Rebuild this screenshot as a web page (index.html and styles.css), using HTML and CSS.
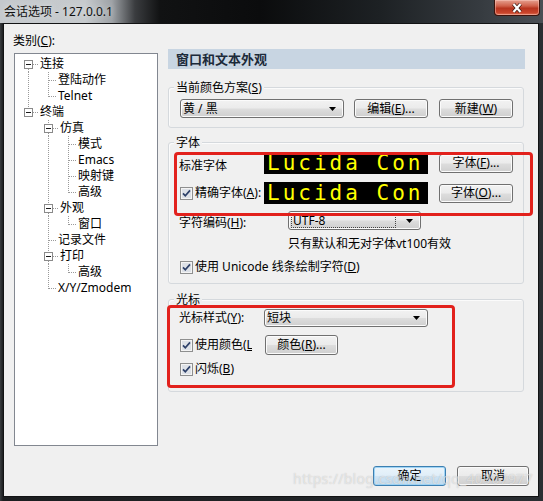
FILE: index.html
```html
<!DOCTYPE html>
<html lang="zh-CN">
<head>
<meta charset="utf-8">
<title>会话选项</title>
<link rel="stylesheet" href="styles.css">
</head>
<body>
<div class="window">
  <div class="titlebar">
    <span class="title">会话选项 - 127.0.0.1</span>
    <div class="close"><svg width="14" height="10" viewBox="0 0 14 10"><path d="M3.5 1 L10.5 9 M10.5 1 L3.5 9" stroke="#3a1a14" stroke-width="3.6"/><path d="M3.5 1 L10.5 9 M10.5 1 L3.5 9" stroke="#fff" stroke-width="2.2"/></svg></div>
  </div>
  <div class="client">
    <div class="main">
      <div class="left">
        <div class="cat-label">类别(<u>C</u>):</div>
        <div class="tree">
          <div class="trow"><svg width="25" height="16"><g class="ln"><path d="M13.5 13V16M18 8.5H23"/></g><rect class="bx" x="9.5" y="4.5" width="8" height="8"/><path class="mn" d="M11 8.5H16"/></svg><span>连接</span></div>
          <div class="trow"><svg width="43" height="16"><g class="ln"><path d="M13.5 0V16M33.5 0V16M34 8.5H42"/></g></svg><span>登陆动作</span></div>
          <div class="trow"><svg width="43" height="16"><g class="ln"><path d="M13.5 0V16M33.5 0V9M34 8.5H42"/></g></svg><span>Telnet</span></div>
          <div class="trow"><svg width="25" height="16"><g class="ln"><path d="M13.5 0V4M18 8.5H23"/></g><rect class="bx" x="9.5" y="4.5" width="8" height="8"/><path class="mn" d="M11 8.5H16"/></svg><span>终端</span></div>
          <div class="trow"><svg width="45" height="16"><g class="ln"><path d="M33.5 0V4M33.5 13V16M38 8.5H43"/></g><rect class="bx" x="29.5" y="4.5" width="8" height="8"/><path class="mn" d="M31 8.5H36"/></svg><span>仿真</span></div>
          <div class="trow"><svg width="63" height="16"><g class="ln"><path d="M33.5 0V16M53.5 0V16M54 8.5H62"/></g></svg><span>模式</span></div>
          <div class="trow"><svg width="63" height="16"><g class="ln"><path d="M33.5 0V16M53.5 0V16M54 8.5H62"/></g></svg><span>Emacs</span></div>
          <div class="trow"><svg width="63" height="16"><g class="ln"><path d="M33.5 0V16M53.5 0V16M54 8.5H62"/></g></svg><span>映射键</span></div>
          <div class="trow"><svg width="63" height="16"><g class="ln"><path d="M33.5 0V16M53.5 0V9M54 8.5H62"/></g></svg><span>高级</span></div>
          <div class="trow"><svg width="45" height="16"><g class="ln"><path d="M33.5 0V4M33.5 13V16M38 8.5H43"/></g><rect class="bx" x="29.5" y="4.5" width="8" height="8"/><path class="mn" d="M31 8.5H36"/></svg><span>外观</span></div>
          <div class="trow"><svg width="63" height="16"><g class="ln"><path d="M33.5 0V16M53.5 0V9M54 8.5H62"/></g></svg><span>窗口</span></div>
          <div class="trow"><svg width="43" height="16"><g class="ln"><path d="M33.5 0V16M34 8.5H42"/></g></svg><span>记录文件</span></div>
          <div class="trow"><svg width="45" height="16"><g class="ln"><path d="M33.5 0V4M33.5 13V16M38 8.5H43"/></g><rect class="bx" x="29.5" y="4.5" width="8" height="8"/><path class="mn" d="M31 8.5H36"/></svg><span>打印</span></div>
          <div class="trow"><svg width="63" height="16"><g class="ln"><path d="M33.5 0V16M53.5 0V9M54 8.5H62"/></g></svg><span>高级</span></div>
          <div class="trow"><svg width="43" height="16"><g class="ln"><path d="M33.5 0V9M34 8.5H42"/></g></svg><span>X/Y/Zmodem</span></div>
        </div>
      </div>
      <div class="right">
        <div class="header">窗口和文本外观</div>

        <div class="group g1">
          <div class="gtitle">当前颜色方案(<u>S</u>)</div>
          <div class="row">
            <div class="combo scheme"><span>黄 / 黑</span><svg width="7" height="4"><path d="M0 0H7L3.5 4Z"/></svg></div>
            <button class="btn b-edit">编辑(<u>E</u>)...</button>
            <button class="btn b-new">新建(<u>W</u>)</button>
          </div>
        </div>

        <div class="group g2">
          <div class="gtitle">字体</div>
          <div class="row r1">
            <div class="lbl low">标准字体</div>
            <div class="preview">Lucida Con</div>
            <button class="btn b-font">字体(<u>F</u>)...</button>
          </div>
          <div class="row r2">
            <div class="lbl chk"><svg class="cb" width="13" height="13" viewBox="0 0 13 13"><rect x="0.5" y="0.5" width="12" height="12" fill="#f4f4f4" stroke="#8e8f8f"/><rect x="2" y="2" width="9" height="9" fill="#dde1e7"/><path d="M3 6.3L5.3 8.8L10 3.4" fill="none" stroke="#2d4069" stroke-width="1.7"/></svg><span>精确字体(<u>A</u>):</span></div>
            <div class="preview">Lucida Con</div>
            <button class="btn b-font">字体(<u>O</u>)...</button>
          </div>
          <div class="row r3">
            <div class="lbl wide low">字符编码(<u>H</u>):</div>
            <div class="combo enc"><span class="focus">UTF-8</span><svg width="7" height="4"><path d="M0 0H7L3.5 4Z"/></svg></div>
          </div>
          <div class="note">只有默认和无对字体vt100有效</div>
          <div class="row r5 chk"><svg class="cb" width="13" height="13" viewBox="0 0 13 13"><rect x="0.5" y="0.5" width="12" height="12" fill="#f4f4f4" stroke="#8e8f8f"/><rect x="2" y="2" width="9" height="9" fill="#dde1e7"/><path d="M3 6.3L5.3 8.8L10 3.4" fill="none" stroke="#2d4069" stroke-width="1.7"/></svg><span>使用 Unicode 线条绘制字符(<u>D</u>)</span></div>
          <div class="mark mark1"></div>
        </div>

        <div class="group g3">
          <div class="gtitle">光标</div>
          <div class="row c1">
            <div class="lbl">光标样式(<u>Y</u>):</div>
            <div class="combo shape"><span>短块</span><svg width="7" height="4"><path d="M0 0H7L3.5 4Z"/></svg></div>
          </div>
          <div class="row c2">
            <div class="lbl chk"><svg class="cb" width="13" height="13" viewBox="0 0 13 13"><rect x="0.5" y="0.5" width="12" height="12" fill="#f4f4f4" stroke="#8e8f8f"/><rect x="2" y="2" width="9" height="9" fill="#dde1e7"/><path d="M3 6.3L5.3 8.8L10 3.4" fill="none" stroke="#2d4069" stroke-width="1.7"/></svg><span class="clip">使用颜色(<u>L</u>)</span></div>
            <button class="btn b-color">颜色(<u>R</u>)...</button>
          </div>
          <div class="row c3 chk"><svg class="cb" width="13" height="13" viewBox="0 0 13 13"><rect x="0.5" y="0.5" width="12" height="12" fill="#f4f4f4" stroke="#8e8f8f"/><rect x="2" y="2" width="9" height="9" fill="#dde1e7"/><path d="M3 6.3L5.3 8.8L10 3.4" fill="none" stroke="#2d4069" stroke-width="1.7"/></svg><span>闪烁(<u>B</u>)</span></div>
          <div class="mark mark2"></div>
        </div>
      </div>
    </div>
    <div class="actions">
      <button class="btn b-ok default">确定</button>
      <button class="btn b-cancel">取消</button>
    </div>
    <span class="watermark">https://blog.csdn.net/qq_40907977</span>
  </div>
</div>
</body>
</html>
```

FILE: styles.css
```css
* { box-sizing: border-box; }
html, body { margin: 0; padding: 0; }
body {
  width: 543px;
  height: 501px;
  overflow: hidden;
  font-family: "Noto Sans", "Noto Sans CJK SC", sans-serif;
  font-size: 12px;
  line-height: 16px;
  color: #000;
  background: #1e2124;
}
u { text-decoration: underline; text-underline-offset: 1px; }

.window {
  width: 543px;
  height: 501px;
  display: flex;
  flex-direction: column;
  background: linear-gradient(to right, #3a3d40 0, #1c1e20 3px, #202326 50%, #2a2e32 100%);
}

.titlebar {
  height: 23px;
  flex: none;
  display: flex;
  justify-content: space-between;
  background: linear-gradient(to right, #c4c8cc 0, #c6cacd 85px, #9ea2a6 112px, #3a3c3f 135px, #111213 160px, #0b0c0d 260px, #1d2124 380px, #363b40 480px, #4a4f55 543px);
}
.title {
  align-self: center;
  margin-left: 4px;
  color: #111;
  font-size: 12px;
  line-height: 16px;
  text-shadow: 0 0 6px #e6e9ec;
}
.close {
  width: 46px;
  height: 16px;
  margin-right: 3px;
  border: 1px solid #3d130c;
  border-top: 0;
  border-radius: 0 0 4px 4px;
  background: linear-gradient(#e6a090 0, #d0604a 40%, #b7341f 55%, #c9442b 85%, #e0765a 100%);
  display: flex;
  align-items: center;
  justify-content: center;
  box-shadow: inset 0 0 0 1px rgba(255,210,200,0.45);
}
.close svg { display: block; }

.client {
  position: relative;
  height: 474px;
  margin: 0 4px 4px 3px;
  border: 1px solid #121314;
  background: #f0f0f0;
  display: flex;
  flex-direction: column;
}

.main {
  display: flex;
  padding: 9px 0 0 9px;
}
.left { width: 145px; flex: none; }
.cat-label { height: 16px; }
.tree {
  margin: 4px 0 0 1px;
  width: 144px;
  height: 393px;
  border: 1px solid #828790;
  background: #fff;
  padding-top: 2px;
}
.trow {
  display: flex;
  align-items: center;
  height: 16px;
  white-space: nowrap;
}
.trow svg { flex: none; display: block; margin-top: -1px; }
.ln path { stroke: #9a9a9a; stroke-width: 1; stroke-dasharray: 1 1; fill: none; }
.bx { fill: #fff; stroke: #8a8a8a; }
.mn { stroke: #1a1a1a; stroke-width: 1; }

.right {
  margin: 16px 0 0 10px;
  width: 357px;
  flex: none;
}
.header {
  height: 20px;
  line-height: 21px;
  padding-left: 8px;
  background: #c8d5e2;
  font-weight: bold;
  font-size: 13px;
  color: #1c2a3a;
}

.group {
  position: relative;
  width: 356px;
  margin-top: 18px;
  border: 1px solid #d5d9dd;
  border-radius: 3px;
  padding: 0 0 9px 10px;
  box-shadow: inset 1px 1px 0 #fbfbfb;
}
.gtitle {
  width: fit-content;
  height: 16px;
  margin: -8px 0 0 -5px;
  padding: 0 2px;
  background: #f0f0f0;
}
.g1 .row { margin: 3px 0 0 1px; height: 19px; }
.g2 { margin-top: 14px; padding-bottom: 8px; }
.g3 { margin-top: 15px; padding-bottom: 14px; }

.row { display: flex; align-items: center; }
.lbl { width: 85px; flex: none; white-space: nowrap; }
.lbl.wide { width: 109px; }
.lbl.low { padding-top: 5px; }
.chk { display: flex; align-items: center; }
.cb { display: block; flex: none; margin: 0 2px 0 1px; }

.btn {
  width: 74px;
  height: 19px;
  padding: 0;
  border: 1px solid #707070;
  border-radius: 3px;
  background: linear-gradient(#f2f2f2 0%, #ebebeb 48%, #dddddd 52%, #cfcfcf 100%);
  box-shadow: inset 0 0 0 1px #fbfbfb;
  font: inherit;
  line-height: 16px;
  color: #000;
  flex: none;
}

.combo {
  display: flex;
  align-items: center;
  justify-content: space-between;
  height: 19px;
  border: 1px solid #707070;
  border-radius: 3px;
  background: linear-gradient(#f2f2f2 0%, #ebebeb 48%, #dddddd 52%, #cfcfcf 100%);
  box-shadow: inset 0 0 0 1px #fbfbfb;
  flex: none;
}
.combo svg { display: block; flex: none; }

/* group 1 */
.scheme { width: 164px; padding: 0 7px 0 2px; }
.b-edit { margin-left: 10px; }
.b-new { margin-left: 11px; }

/* group 2 */
.r1 { margin-top: 1px; height: 22px; }
.r2 { margin-top: 8px; height: 22px; }
.preview {
  width: 164px;
  height: 22px;
  flex: none;
  background: #000;
  color: #ffff00;
  font-family: "DejaVu Sans Mono", monospace;
  font-size: 21px;
  line-height: 22px;
  letter-spacing: 3px;
  padding-left: 3px;
  white-space: nowrap;
  overflow: hidden;
}
.b-font { margin-left: 11px; }
.r3 { margin-top: 7px; height: 19px; }
.enc { width: 133px; padding: 2px 7px 2px 2px; }
.focus {
  flex: 1;
  height: 15px;
  margin-right: 10px;
  border: 1px dotted #444;
  padding-left: 1px;
  line-height: 13px;
}
.note { margin: 6px 0 0 109px; height: 16px; }
.r5 { margin-top: 7px; height: 16px; }

/* group 3 */
.c1 { margin-top: 1px; height: 18px; }
.shape { width: 164px; height: 18px; padding: 0 7px 0 2px; }
.c2 { margin-top: 8px; height: 20px; }
.clip { width: 57px; overflow: hidden; white-space: nowrap; }
.b-color { width: 73px; height: 20px; margin-left: 1px; }
.c3 { margin-top: 6px; height: 16px; }

/* red annotation boxes */
.mark {
  position: absolute;
  border: 3px solid #e2211c;
  border-radius: 4px;
  pointer-events: none;
}
.mark1 { left: 5px; top: 9px; width: 359px; height: 64px; }
.mark2 { left: -2px; top: 5px; width: 288px; height: 83px; }

/* bottom buttons */
.actions {
  display: flex;
  justify-content: flex-end;
  margin-top: 20px;
  padding-right: 9px;
}
.b-ok { width: 73px; height: 20px; }
.b-cancel { width: 72px; height: 20px; margin-left: 11px; }
.default {
  border-color: #3c7fb1;
  box-shadow: inset 0 0 0 1px #9fd4f5;
  background: linear-gradient(#eaf4fb 0%, #e0eef8 48%, #cfe4f4 52%, #c0dcf0 100%);
}

.watermark {
  position: absolute;
  left: 289px;
  top: 446px;
  font-size: 14px;
  line-height: 18px;
  letter-spacing: 0.3px;
  color: rgba(255,255,255,0.55);
  text-shadow: 0 0 1px rgba(90,90,90,0.35);
  white-space: nowrap;
  pointer-events: none;
}
```
